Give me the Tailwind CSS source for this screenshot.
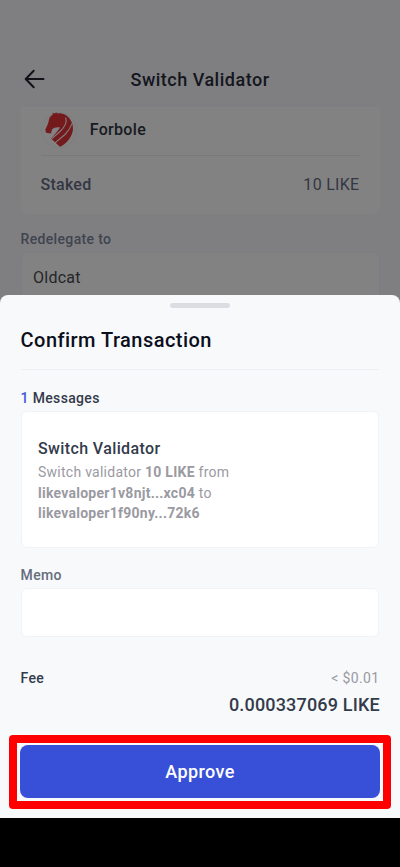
<!DOCTYPE html>
<html lang="en">
<head>
<meta charset="utf-8">
<title>Confirm Transaction</title>
<script src="https://cdn.jsdelivr.net/npm/@tailwindcss/browser@4"></script>
</head>
<body class="bg-black">
<div class="relative flex h-[867px] w-[400px] flex-col overflow-hidden bg-black font-['Roboto',sans-serif]">
  <main class="h-[818px] bg-[#7f7f82] px-[20.5px] pt-[60px]">
    <header class="relative flex h-[38px] items-center justify-center">
      <svg class="absolute left-[3.5px] top-[8px] h-[22px] w-[22px]" viewBox="0 0 22 22" fill="none" stroke="#101218" stroke-width="2" stroke-linecap="round" stroke-linejoin="round"><path d="M19.5 11H2M9.7 2.7L1.7 11L9.7 19.3"/></svg>
      <h1 class="pt-px text-[18px] font-medium leading-6 tracking-[0.5px] text-[#14161d]">Switch Validator</h1>
    </header>
    <section class="mt-[9px] h-[107px] rounded-b-lg bg-[#828282] px-5">
      <div class="flex h-[49px] items-center border-b border-[#79797b] pb-[2px]">
        <div class="flex h-[36px] w-[36px] items-center justify-center rounded-full border border-[#7e7e7f]">
          <svg class="mb-[2px] h-[35px] w-[28px] shrink-0" viewBox="0 0 84 104" fill="#741a1d"><path d="M22 2L29 4L34 1L37 4C58 0 83 18 84 48C84 72 65 94 45 104L18 79C25 72 37 60 45 46C34 44 27 47 21 52L18 64L3 62L1 52L9 35L14 15L24 6Z"/><path d="M20 80L45 58C60 44 67 30 62 16M30 92L60 67C70 57 77 46 82 33" fill="none" stroke="#828282" stroke-width="3.2"/></svg>
        </div>
        <span class="ml-[13.3px] text-[16px] font-medium leading-5 tracking-[0.3px] text-[#171a21]">Forbole</span>
      </div>
      <div class="flex h-[57px] items-center justify-between text-[16px] leading-5 text-[#333743]">
        <span class="font-medium tracking-[0.25px]">Staked</span><span class="tracking-[0.3px]">10 LIKE</span>
      </div>
    </section>
    <label class="mt-[16px] block text-[14px] font-medium leading-[18px] tracking-[0.35px] text-[#40444f]">Redelegate to</label>
    <div class="mt-1 flex h-[51px] items-center rounded-md border border-[#7d7d7f] bg-[#828282] pl-[11.5px] text-[16px] tracking-[0.25px] text-[#252628]">Oldcat</div>
  </main>

  <section class="absolute inset-x-0 top-[295px] flex h-[523px] flex-col rounded-t-lg bg-[#f8f9fb] px-[20.6px]">
    <div class="mx-auto mt-2 h-[5px] w-[60px] shrink-0 rounded-full bg-[#dcdce3]"></div>
    <h2 class="mt-[19px] h-[43px] border-b border-[#eff0f4] text-[20px] font-medium leading-[26px] tracking-[0.46px] text-[#0b0f1b]">Confirm Transaction</h2>
    <p class="mt-[19px] text-[14px] font-medium leading-[19px] tracking-[0.33px] text-[#333b4b]"><span class="text-[#4456dd]">1</span> Messages</p>
    <article class="mt-[3px] h-[137px] rounded-md border border-[#f2f3f6] bg-white px-[16.4px] pt-[26px]">
      <h3 class="text-[16px] font-medium leading-[22px] tracking-[0.38px] text-[#333b4b]">Switch Validator</h3>
      <p class="mt-[2px] text-[14px] leading-[20.5px] tracking-[0.26px] text-[#9a9aa2]">Switch validator <b>10 LIKE</b> from<br><b>likevaloper1v8njt...xc04</b> to<br><b>likevaloper1f90ny...72k6</b></p>
    </article>
    <label class="mt-[18px] block text-[14px] font-medium leading-[19px] tracking-[0.3px] text-[#656c7c]">Memo</label>
    <div class="mt-[3px] h-[49px] rounded-md border border-[#f2f3f6] bg-white"></div>
    <div class="mt-[32px] flex items-center justify-between text-[14px] leading-[19px] tracking-[0.35px]">
      <span class="font-medium text-[#333b4b]">Fee</span><span class="text-[#9a9aa2]">&lt; $0.01</span>
    </div>
    <p class="-mr-[0.5px] mt-[5px] text-right text-[18px] font-medium leading-6 tracking-[0.18px] text-[#333b4b]">0.000337069 LIKE</p>
    <div class="-mx-[11.6px] mt-[18px] h-[74px] rounded-[4px] bg-[#ff0000] p-2">
      <div class="h-full w-full bg-[#f8f9fb] px-[3px] pt-[2px]">
        <button class="block h-[53px] w-full rounded-lg bg-[#384fd7] pb-px text-[18px] font-medium tracking-[0.4px] text-white">Approve</button>
      </div>
    </div>
  </section>
</div>
</body>
</html>
